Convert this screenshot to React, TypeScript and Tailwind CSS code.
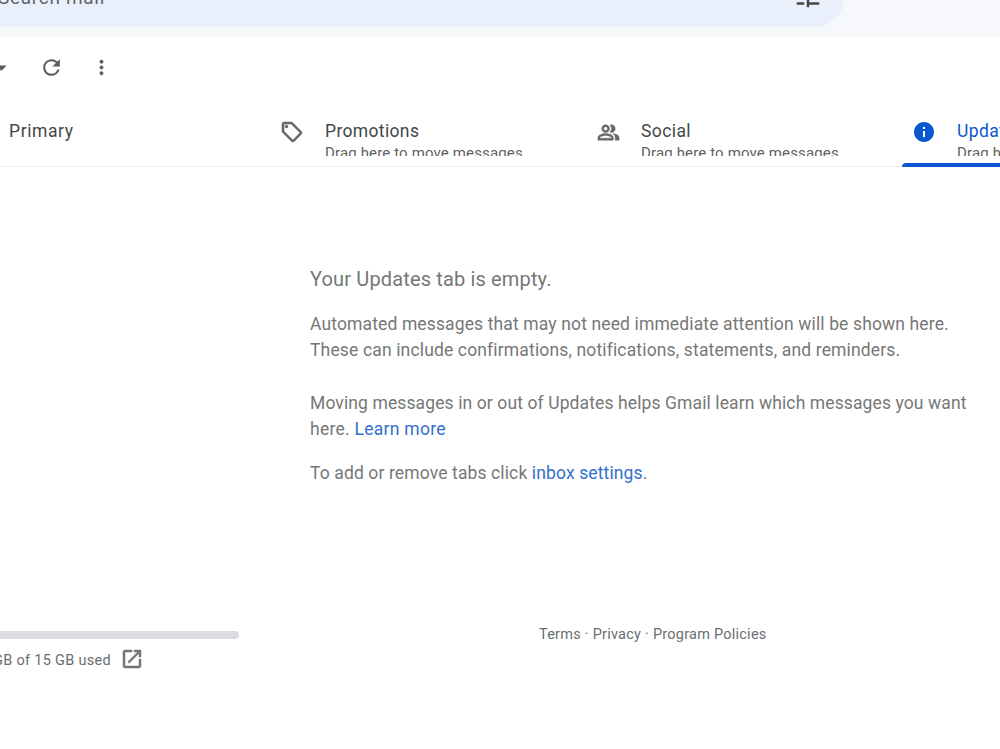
import { ReactNode } from 'react'
import clsx from 'clsx'
import {
  MdArrowDropDown,
  MdInfo,
  MdMoreVert,
  MdOpenInNew,
  MdOutlinePeopleAlt,
  MdOutlineSell,
  MdRefresh,
  MdTune,
} from 'react-icons/md'

interface TabProps {
  label: string
  icon?: ReactNode
  hint?: string
  active?: boolean
  labelClassName?: string
}

// Material icons carry an unfilled bounding path which must not pick up the stroke
const BOLD_ICON = 'stroke-[0.5] [&_path[fill=none]]:stroke-none'

const Tab = ({ label, icon, hint, active = false, labelClassName }: TabProps) => (
  <div
    className={clsx(
      'flex h-full w-[316px] shrink-0 flex-col justify-between',
      active ? 'text-[#0b57d0]' : 'border-b border-[#eeeff0] text-[#444746]'
    )}
  >
    <div className="flex h-[52px] overflow-hidden">
      <div className="flex h-[56px] w-[55px] shrink-0 pl-[10px] pt-[16px]">{icon}</div>
      <div className="whitespace-nowrap pt-[16px]">
        <p className={clsx('text-[17.5px] leading-[22px]', labelClassName)}>{label}</p>
        {hint && (
          <p className="mt-[2px] text-[15px] leading-[18px] tracking-[0.14px] text-[#5f6163]">{hint}</p>
        )}
      </div>
    </div>
    {active && <div className="h-1 rounded-tl-[4px] bg-[#0b57d0]" />}
  </div>
)

const SearchHeader = () => (
  <header className="h-[37px] overflow-hidden bg-[#f6f8fc]">
    <div className="-mt-[31px] flex h-[58px] w-[844px] items-start justify-between rounded-r-full bg-[#e9f0fb] pr-[21px]">
      <span className="-ml-[2px] pt-[17px] text-[19px] leading-[24px] tracking-[0.7px] text-[#5f6368]">
        Search mail
      </span>
      <MdTune className="mt-[12px] size-[30px] text-[#444746]" />
    </div>
  </header>
)

const Toolbar = () => (
  <div className="flex h-[67px] items-center pb-[7px] text-[#5b5d5f]">
    <MdArrowDropDown className="-ml-[11px] size-[25px]" />
    <MdRefresh className="ml-[25px] size-[25px]" />
    <MdMoreVert className="ml-[26px] size-[23px]" />
  </div>
)

const EmptyState = () => (
  <section className="ml-[310px] pt-[98px] whitespace-nowrap text-[17.5px] leading-[26px] text-[#777]">
    <h1 className="text-[20px] leading-[28px] tracking-[0.15px]">Your Updates tab is empty.</h1>
    <div className="mt-[18px]">
      <p className="tracking-[0.13px]">
        Automated messages that may not need immediate attention will be shown here.
      </p>
      <p className="tracking-[0.15px]">
        These can include confirmations, notifications, statements, and reminders.
      </p>
    </div>
    <div className="mt-[27px]">
      <p className="tracking-[0.11px]">
        Moving messages in or out of Updates helps Gmail learn which messages you want
      </p>
      <p className="tracking-[0.27px]">
        here. <a className="text-[#3370cc]">Learn more</a>
      </p>
    </div>
    <p className="mt-[18px] tracking-[0.12px]">
      To add or remove tabs click <a className="text-[#3370cc]">inbox settings</a>.
    </p>
  </section>
)

const Footer = () => (
  <footer className="mt-[138px] flex text-[14.5px] leading-[20px] text-[#6b6d70]">
    <div className="w-[539px] pt-[7px]">
      <div className="h-2 w-[239px] rounded-r-full bg-[#dadce0]" />
      <div className="mt-[8px] flex items-center whitespace-nowrap">
        <span className="-ml-[7px] w-[127px] pt-[3px] tracking-[0.3px]">GB of 15 GB used</span>
        <MdOpenInNew className={clsx('size-[24px] text-[#747678]', BOLD_ICON)} />
      </div>
    </div>
    <p className="pt-px tracking-[0.24px]">Terms · Privacy · Program Policies</p>
  </footer>
)

const App = () => (
  <div className="h-[749px] w-[1000px] overflow-hidden bg-white font-['Roboto',sans-serif]">
    <SearchHeader />
    <Toolbar />
    <nav className="flex h-[63px] overflow-hidden">
      <div className="-ml-[46px] flex">
        <Tab label="Primary" labelClassName="tracking-[0.6px]" />
        <Tab
          label="Promotions"
          icon={<MdOutlineSell className={clsx('size-[24px] text-[#666]', BOLD_ICON)} />}
          hint="Drag here to move messages"
          labelClassName="tracking-[0.35px]"
        />
        <Tab
          label="Social"
          icon={
            <MdOutlinePeopleAlt className={clsx('ml-px mt-px size-[23px] text-[#666]', BOLD_ICON)} />
          }
          hint="Drag here to move messages"
          labelClassName="tracking-[0.4px]"
        />
        <Tab
          label="Updates"
          icon={<MdInfo className="size-[24px]" />}
          hint="Drag here to move messages"
          labelClassName="tracking-[0.4px]"
          active
        />
      </div>
    </nav>
    <EmptyState />
    <Footer />
  </div>
)

export default App
